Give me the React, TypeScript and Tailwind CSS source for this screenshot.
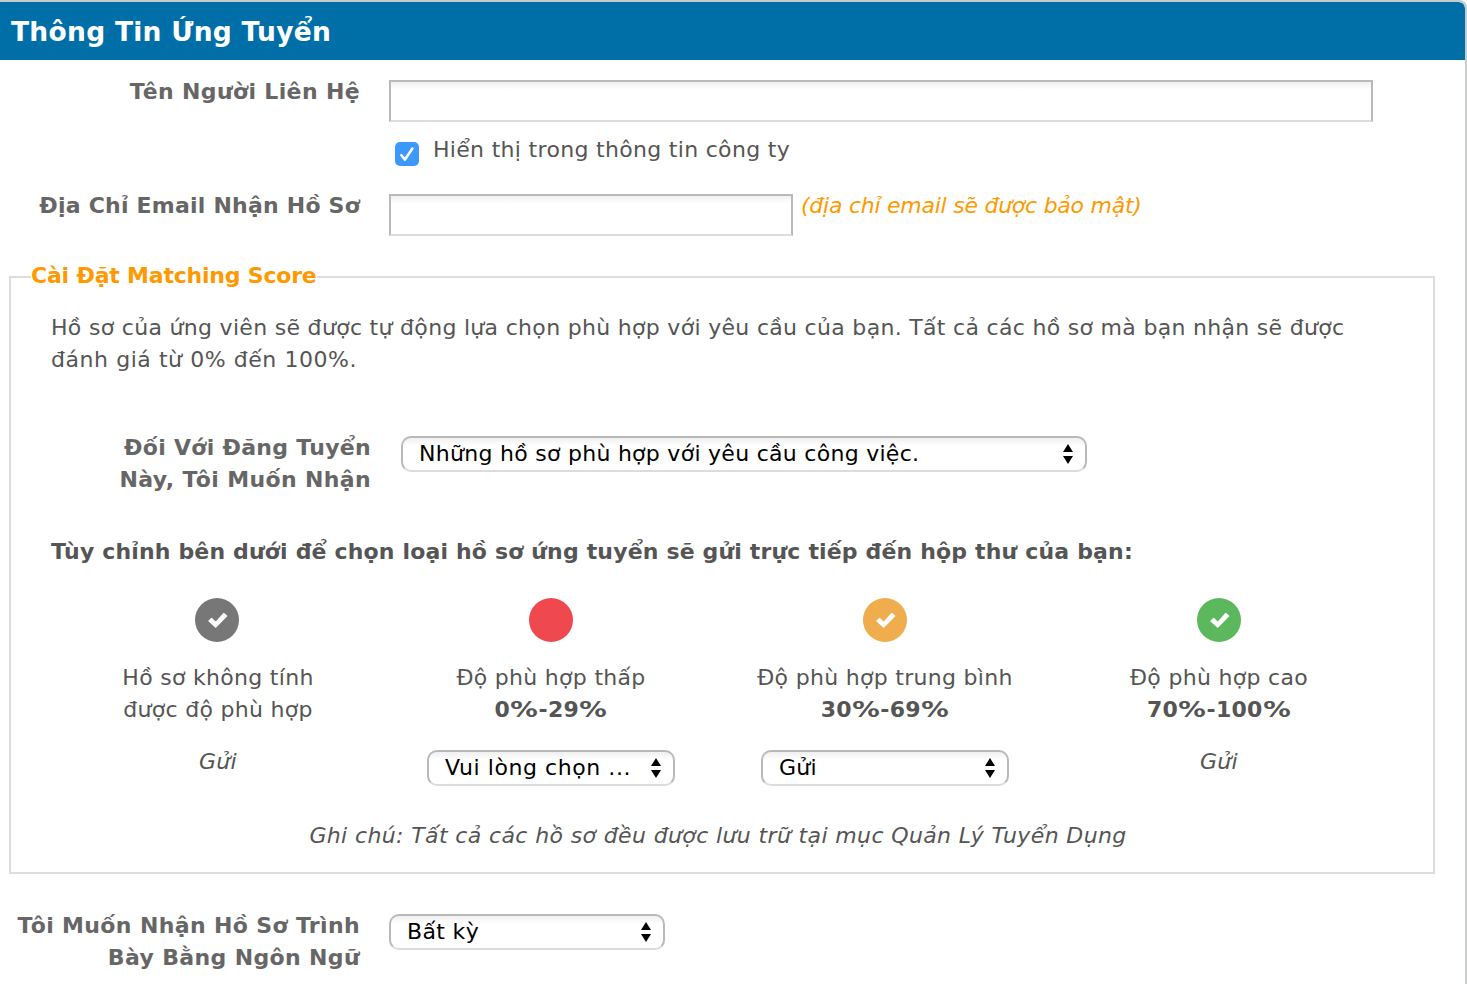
import type { ReactNode } from "react";

function Check({ className }: { className: string }) {
  return (
    <svg viewBox="0 0 20 16" className={className} fill="white" stroke="white" strokeWidth="1.2" strokeLinejoin="round">
      <path d="M1 9 3.6 6.4 7.8 10.4 15.8 1.4 18.6 4 7.8 15.2Z" />
    </svg>
  );
}

function SelectBox({ className, children }: { className: string; children: ReactNode }) {
  return (
    <button
      type="button"
      className={`flex h-9 shrink-0 items-center justify-between rounded-[10px] border-2 border-[#b9b9b9] border-b-[#dcdcdc] bg-white bg-linear-to-b from-[#f0f0f0] to-white to-25% pr-3 pl-4 text-black ${className}`}
    >
      <span className="leading-8 whitespace-nowrap">{children}</span>
      <svg viewBox="0 0 10 20" className="h-5 w-2.5" fill="black">
        <path d="M5 0 10 8H0ZM5 20 0 12H10Z" />
      </svg>
    </button>
  );
}

function TextInput({ className }: { className: string }) {
  return (
    <input
      type="text"
      className={`h-[42px] shrink-0 border-2 border-[#b9b9b9] border-b-[#dcdcdc] bg-linear-to-b from-[#f0f0f0] to-white to-20% px-2 outline-none ${className}`}
    />
  );
}

function Percent() {
  return <span className="mx-[3px] inline-block scale-x-125">%</span>;
}

function Range({ from, to }: { from: number; to: number }) {
  return (
    <strong className="tracking-[0.3px]">
      {from}
      <Percent />-{to}
      <Percent />
    </strong>
  );
}

function Score({ color, checked, children }: { color: string; checked: boolean; children: ReactNode }) {
  return (
    <div className="flex flex-col items-center whitespace-nowrap">
      <div className={`flex size-11 items-center justify-center rounded-full ${color}`}>
        {checked && <Check className="ml-0.5 h-4 w-5" />}
      </div>
      <div className="mt-5 flex w-full flex-col items-center tracking-[0.3px]">{children}</div>
    </div>
  );
}

export default function App() {
  return (
    <div className="h-[984px] w-[1467px] overflow-hidden rounded-tr-lg border-t-2 border-r-2 border-[#c9cacc] bg-white font-['DejaVu_Sans',sans-serif] text-[22px] leading-8 text-[#555]">
      <header className="flex h-[58px] items-center rounded-tr-md bg-[#006fa7] pt-0.5 pl-[11px] whitespace-nowrap text-white">
        <h1 className="text-[26.5px] font-bold tracking-[0.28px]">Thông Tin Ứng Tuyển</h1>
      </header>

      <div className="flex pt-5">
        <div className="-mt-1 w-[360px] text-right font-bold whitespace-nowrap text-[#666]">
          <span className="tracking-[0.36px]">Tên Người Liên Hệ</span>
        </div>
        <div className="ml-[29px]">
          <TextInput className="w-[984px]" />
          <label className="mt-3 flex h-8 whitespace-nowrap">
            <span className="mt-2 ml-1.5 flex size-6 items-center justify-center rounded-[5px] bg-[#3b99fc]">
              <svg viewBox="0 0 16 16" className="size-4" fill="none" stroke="white" strokeWidth="2.6" strokeLinecap="round" strokeLinejoin="round">
                <path d="M2.4 9.2 6 13.6 13.4 2.6" />
              </svg>
            </span>
            <span className="ml-3.5 tracking-[0.31px]">Hiển thị trong thông tin công ty</span>
          </label>
        </div>
      </div>

      <div className="flex pt-7">
        <div className="-mt-1 w-[360px] text-right font-bold whitespace-nowrap text-[#666]">
          <span className="tracking-[0.22px]">Địa Chỉ Email Nhận Hồ Sơ</span>
        </div>
        <TextInput className="ml-[29px] w-[404px]" />
        <em className="-mt-1 ml-2 tracking-[-0.25px] whitespace-nowrap text-[#ff9900]">(địa chỉ email sẽ được bảo mật)</em>
      </div>

      <section className="mt-10 ml-[9px] h-[598px] w-[1426px] border-2 border-[#ddd] px-10">
        <h2 className="-mt-[18px] -ml-5 w-fit bg-white font-bold whitespace-nowrap text-[#ff9900]">
          <span className="tracking-[-0.2px]">Cài Đặt Matching Score</span>
        </h2>
        <p className="mt-5 whitespace-nowrap">
          <span className="tracking-[0.307px]">Hồ sơ của ứng viên sẽ được tự động lựa chọn phù hợp với yêu cầu của bạn. Tất cả các hồ sơ mà bạn nhận sẽ được</span>
          <br />
          <span className="tracking-[0.56px]">đánh giá từ 0% đến 100%.</span>
        </p>
        <div className="mt-14 flex">
          <div className="w-80 text-right font-bold whitespace-nowrap text-[#666]">
            <span className="tracking-[0.3px]">Đối Với Đăng Tuyển</span>
            <br />
            <span className="tracking-[0.36px]">Này, Tôi Muốn Nhận</span>
          </div>
          <SelectBox className="mt-1 ml-[30px] w-[686px] tracking-[0.28px]">Những hồ sơ phù hợp với yêu cầu công việc.</SelectBox>
        </div>
        <h3 className="mt-10 font-bold whitespace-nowrap">
          <span className="tracking-[0.165px]">Tùy chỉnh bên dưới để chọn loại hồ sơ ứng tuyển sẽ gửi trực tiếp đến hộp thư của bạn:</span>
        </h3>
        <div className="mt-[30px] -ml-px grid w-[1336px] grid-cols-4">
          <Score color="bg-[#777]" checked>
            <span className="ml-0.5">Hồ sơ không tính</span>
            <span className="ml-0.5">được độ phù hợp</span>
            <em className="mt-5 ml-0.5">Gửi</em>
          </Score>
          <Score color="bg-[#f0484f]" checked={false}>
            <span>Độ phù hợp thấp</span>
            <Range from={0} to={29} />
            <SelectBox className="mt-6 w-[248px] tracking-[0.56px]">Vui lòng chọn ...</SelectBox>
          </Score>
          <Score color="bg-[#f0ad4e]" checked>
            <span>Độ phù hợp trung bình</span>
            <Range from={30} to={69} />
            <SelectBox className="mt-6 w-[248px] tracking-[0.3px]">Gửi</SelectBox>
          </Score>
          <Score color="bg-[#5cb85c]" checked>
            <span>Độ phù hợp cao</span>
            <Range from={70} to={100} />
            <em className="mt-5">Gửi</em>
          </Score>
        </div>
        <p className="mt-[34px] w-[1334px] text-center whitespace-nowrap italic">
          <span className="tracking-[0.375px]">Ghi chú: Tất cả các hồ sơ đều được lưu trữ tại mục Quản Lý Tuyển Dụng</span>
        </p>
      </section>

      <div className="mt-9 flex">
        <div className="w-[360px] text-right font-bold whitespace-nowrap text-[#666]">
          <span className="tracking-[0.36px]">Tôi Muốn Nhận Hồ Sơ Trình</span>
          <br />
          <span className="tracking-[0.36px]">Bày Bằng Ngôn Ngữ</span>
        </div>
        <SelectBox className="mt-1 ml-[29px] w-[276px] tracking-[0.35px]">Bất kỳ</SelectBox>
      </div>
    </div>
  );
}
